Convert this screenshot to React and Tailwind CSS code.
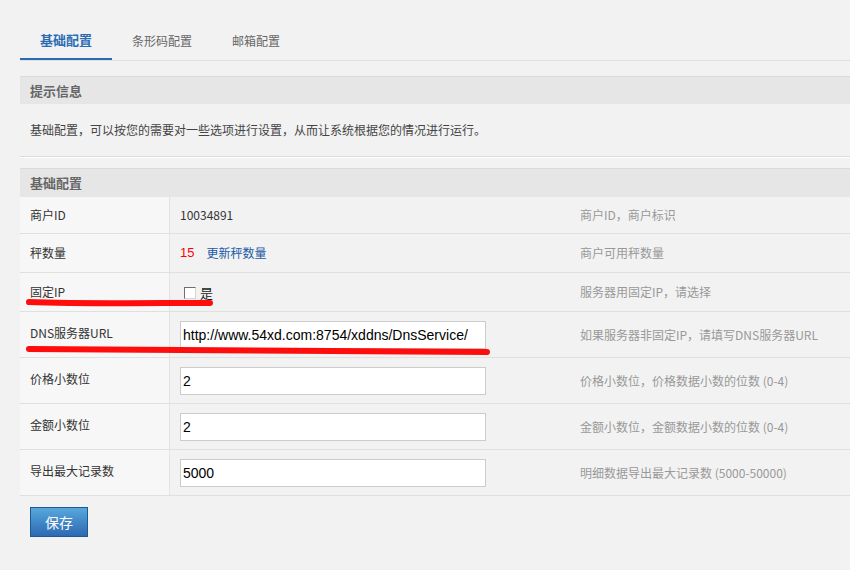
import React from "react";

const cjk = { fontFamily: '"Noto Sans CJK SC", "Liberation Sans", sans-serif' };

const rows = [
  { label: "商户ID", h: "h-[37px]", value: <span className="text-[#333]">10034891</span>, desc: "商户ID，商户标识" },
  {
    label: "秤数量",
    h: "h-[39px]",
    value: (
      <span className="flex items-center">
        <span className="text-[#ff0000] text-[13px] font-['Liberation_Sans']">15</span>
        <a className="ml-[12px] text-[#1a5aa6]" href="#">更新秤数量</a>
      </span>
    ),
    desc: "商户可用秤数量",
  },
  {
    label: "固定IP",
    h: "h-[39px]",
    value: (
      <span className="flex items-center pl-[4px] pt-[2px]">
        <span className="w-[12px] h-[12px] bg-white border border-t-[#6f6f6f] border-l-[#6f6f6f] border-r-[#d4d4d4] border-b-[#d4d4d4]" />
        <span className="ml-[4px] text-[13px] text-[#222]">是</span>
      </span>
    ),
    desc: "服务器用固定IP，请选择",
  },
  { label: "DNS服务器URL", h: "h-[46px]", input: "http://www.54xd.com:8754/xddns/DnsService/", desc: "如果服务器非固定IP，请填写DNS服务器URL" },
  { label: "价格小数位", h: "h-[46px]", input: "2", desc: "价格小数位，价格数据小数的位数 (0-4)" },
  { label: "金额小数位", h: "h-[46px]", input: "2", desc: "金额小数位，金额数据小数的位数 (0-4)" },
  { label: "导出最大记录数", h: "h-[46px]", input: "5000", desc: "明细数据导出最大记录数 (5000-50000)" },
];

export default function App() {
  return (
    <div className="relative w-full min-h-[570px] bg-[#f2f2f2] pl-5 pt-[22px] text-[12px]" style={cjk}>
      {/* tabs */}
      <div className="flex border-b border-[#e0e0e0]">
        <div className="h-[38px] px-5 flex items-center border-b-2 border-[#2a6cb3] text-[13px] font-bold text-[#2a6cb3]">基础配置</div>
        <div className="h-[38px] px-5 flex items-center text-[12px] text-[#666]">条形码配置</div>
        <div className="h-[38px] px-5 flex items-center text-[12px] text-[#666]">邮箱配置</div>
      </div>

      {/* tips */}
      <div className="mt-[15px] h-[28px] bg-[#e6e6e6] border-t border-[#dadada] flex items-center pl-[10px] text-[13px] font-bold text-[#666]">
        提示信息
      </div>
      <div className="h-[53px] flex items-center pl-[10px] text-[#444] border-b border-[#dcdcdc]">
        基础配置，可以按您的需要对一些选项进行设置，从而让系统根据您的情况进行运行。
      </div>
      <div className="h-px bg-white" />

      {/* settings */}
      <div className="mt-[10px] h-[29px] bg-[#e6e6e6] border-t border-[#dadada] flex items-center pl-[10px] text-[13px] font-bold text-[#666]">
        基础配置
      </div>
      <div>
        {rows.map((r) => (
          <div key={r.label} className={`flex ${r.h} border-b border-[#e0e0e0]`}>
            <div
              className={`w-[150px] shrink-0 bg-[#f7f7f7] border-r border-[#e3e3e3] pl-[10px] text-[#333] flex ${
                r.input ? "items-start pt-[12px]" : "items-center"
              }`}
            >
              {r.label}
            </div>
            <div className="w-[400px] shrink-0 pl-[10px] flex items-center">
              {r.input ? (
                <input
                  readOnly
                  value={r.input}
                  className="w-[306px] h-[28px] bg-white border border-[#cccccc] pl-[2px] text-[14px] text-black outline-none font-['Liberation_Sans']"
                />
              ) : (
                r.value
              )}
            </div>
            <div className="flex-1 pl-[10px] flex items-center text-[#999]">{r.desc}</div>
          </div>
        ))}
      </div>

      <div className="pt-[11px] pl-[10px]">
        <button className="w-[58px] h-[30px] border border-[#1d5a95] bg-gradient-to-b from-[#58a8dc] to-[#2d69b2] text-white text-[14px]">
          保存
        </button>
      </div>

      {/* red marker strokes */}
      <svg className="absolute left-0 top-0 pointer-events-none" width="850" height="570">
        <path d="M29 302 C 80 304, 150 303, 210 303" stroke="#ff0000" strokeWidth="6" strokeLinecap="round" fill="none" opacity="0.95" />
        <path d="M29 349 C 160 350, 320 351, 487 352" stroke="#ff0000" strokeWidth="6" strokeLinecap="round" fill="none" opacity="0.95" />
      </svg>
    </div>
  );
}
